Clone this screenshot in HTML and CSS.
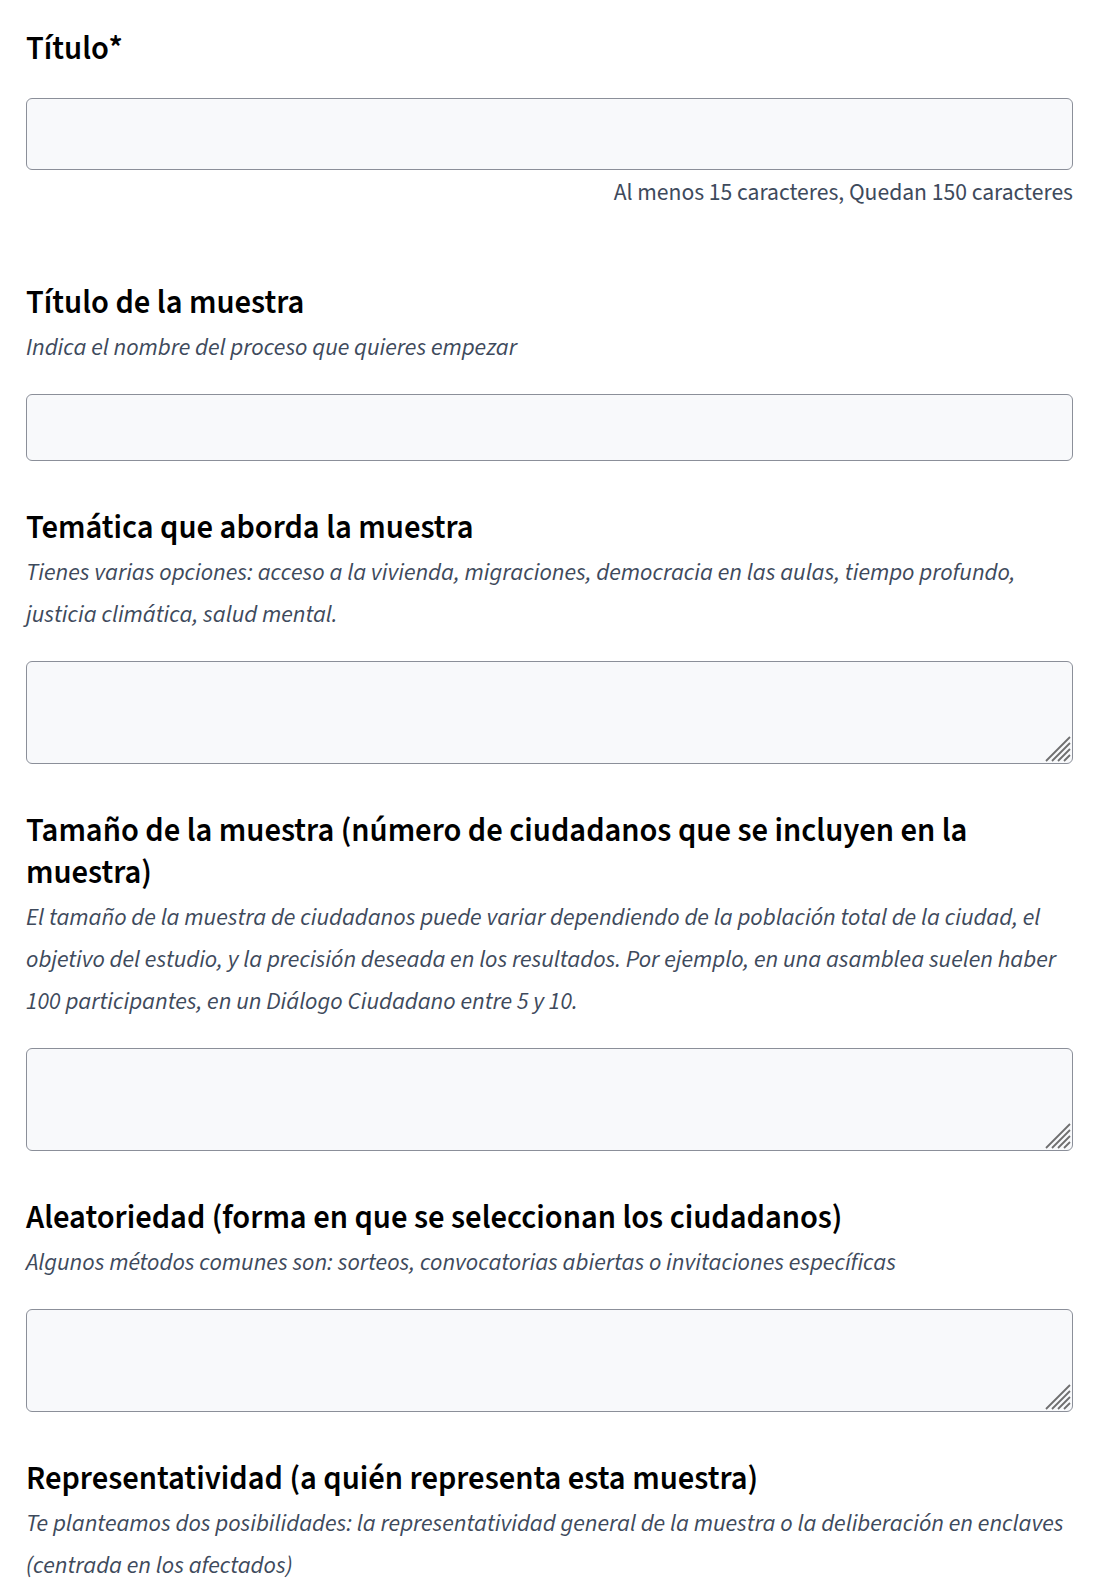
FILE: index.html
```html
<!DOCTYPE html>
<html lang="es">
<head>
<meta charset="utf-8">
<link rel="stylesheet" href="styles.css">
<title>Formulario</title>
</head>
<body>
<form class="form">
  <div class="field field-first">
    <label class="field-label" for="titulo">Título*</label>
    <input class="field-input input-tall" id="titulo" type="text">
    <p class="field-help">Al menos 15 caracteres, Quedan 150 caracteres</p>
  </div>

  <div class="field">
    <label class="field-label" for="titulo-muestra">Título de la muestra</label>
    <p class="field-desc">Indica el nombre del proceso que quieres empezar</p>
    <input class="field-input" id="titulo-muestra" type="text">
  </div>

  <div class="field">
    <label class="field-label" for="tematica">Temática que aborda la muestra</label>
    <p class="field-desc">Tienes varias opciones: acceso a la vivienda, migraciones, democracia en las aulas, tiempo profundo, justicia climática, salud mental.</p>
    <div class="area-wrap">
      <textarea class="field-area" id="tematica"></textarea>
      <svg class="area-grip" width="28" height="28" viewBox="0 0 28 28" aria-hidden="true"><path d="M2 26 L26 2 M8 26 L26 8 M14 26 L26 14 M20 26 L26 20"/></svg>
    </div>
  </div>

  <div class="field">
    <label class="field-label" for="tamano">Tamaño de la muestra (número de ciudadanos que se incluyen en la muestra)</label>
    <p class="field-desc">El tamaño de la muestra de ciudadanos puede variar dependiendo de la población total de la ciudad, el objetivo del estudio, y la precisión deseada en los resultados. Por ejemplo, en una asamblea suelen haber 100 participantes, en un Diálogo Ciudadano entre 5 y 10.</p>
    <div class="area-wrap">
      <textarea class="field-area" id="tamano"></textarea>
      <svg class="area-grip" width="28" height="28" viewBox="0 0 28 28" aria-hidden="true"><path d="M2 26 L26 2 M8 26 L26 8 M14 26 L26 14 M20 26 L26 20"/></svg>
    </div>
  </div>

  <div class="field">
    <label class="field-label" for="aleatoriedad">Aleatoriedad (forma en que se seleccionan los ciudadanos)</label>
    <p class="field-desc">Algunos métodos comunes son: sorteos, convocatorias abiertas o invitaciones específicas</p>
    <div class="area-wrap">
      <textarea class="field-area" id="aleatoriedad"></textarea>
      <svg class="area-grip" width="28" height="28" viewBox="0 0 28 28" aria-hidden="true"><path d="M2 26 L26 2 M8 26 L26 8 M14 26 L26 14 M20 26 L26 20"/></svg>
    </div>
  </div>

  <div class="field">
    <label class="field-label" for="representatividad">Representatividad (a quién representa esta muestra)</label>
    <p class="field-desc">Te planteamos dos posibilidades: la representatividad general de la muestra o la deliberación en enclaves (centrada en los afectados)</p>
  </div>
</form>
</body>
</html>
```

FILE: styles.css
```css
html, body {
  margin: 0;
  padding: 0;
  background: #ffffff;
}

body {
  font-family: "Source Sans Pro", "Source Sans 3", Lato, "Liberation Sans", sans-serif;
  color: #000000;
}

.form {
  padding: 28px 29px 0 26px;
}

.field {
  display: flex;
  flex-direction: column;
  margin-top: 46px;
}

.field-first {
  margin-top: 0;
}

.field-label {
  font-size: 32.6px;
  font-weight: 600;
  line-height: 42px;
  color: #000000;
  margin: 0 0 3px 0;
}

.field-first .field-label {
  margin-bottom: 28px;
}

.field-desc {
  margin: 0 0 25px 0;
  font-size: 24.1px;
  font-style: italic;
  line-height: 42px;
  color: #3e4a5c;
}

.field-help {
  margin: 8px 0 28px 0;
  font-size: 23.6px;
  line-height: 30px;
  text-align: right;
  color: #3e4a5c;
}

.field-input,
.field-area {
  box-sizing: border-box;
  width: 100%;
  margin: 0;
  border: 1px solid #8b8f99;
  border-radius: 6px;
  background: #f8f9fb;
  font-family: inherit;
  font-size: 20px;
  padding: 8px 12px;
  display: block;
}

.field-input {
  height: 67px;
}

.input-tall {
  height: 72px;
}

.area-wrap {
  position: relative;
}

.field-area {
  height: 103px;
  resize: none;
}

.area-grip {
  position: absolute;
  right: 1px;
  bottom: 1px;
  pointer-events: none;
}

.area-grip path {
  stroke: #6f6f6f;
  stroke-width: 1.8;
  fill: none;
}
```
